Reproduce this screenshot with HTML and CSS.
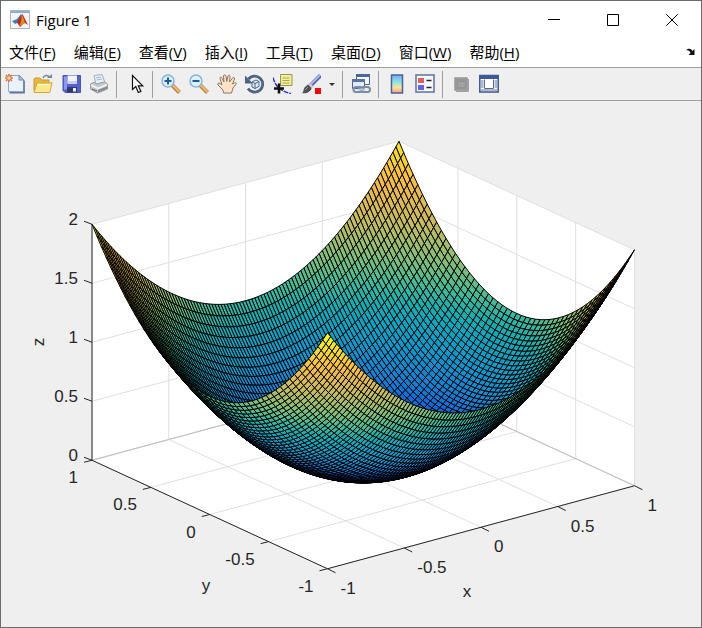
FILE: index.html
```html
<!DOCTYPE html>
<html lang="zh-CN">
<head>
<meta charset="utf-8">
<title>Figure 1</title>
<link rel="stylesheet" href="styles.css">
</head>
<body>
<div class="window">
  <header class="titlebar">
    <svg class="app-icon" viewBox="0 0 20 20" aria-hidden="true">
      <rect x=".5" y=".5" width="19" height="18" fill="#f3f5f7" stroke="#a9b4bf"/>
      <rect x="1" y="1" width="18" height="2" fill="#8fb0cc"/>
      <path d="M2 11l5-2 4-5 1 4-3 6-2-1-2 1z" fill="#3f7fb5"/>
      <path d="M7 12l5-8 1 1 5 10-3-2-2 1-3 3-2-3z" fill="#b5301c"/>
      <path d="M12 4l-1 8-2 4 4-2 2-1z" fill="#f08a24"/>
    </svg>
    <h1 class="title">Figure 1</h1>
    <div class="window-buttons">
      <button class="window-button" aria-label="最小化"><svg viewBox="0 0 12 12"><path d="M0 5.5h12"/></svg></button>
      <button class="window-button" aria-label="最大化"><svg viewBox="0 0 12 12"><path d="M.5.5h11v11H.5z"/></svg></button>
      <button class="window-button" aria-label="关闭"><svg viewBox="0 0 12 12"><path d="M.3.3l11.4 11.4M11.7.3L.3 11.7"/></svg></button>
    </div>
  </header>
  <nav class="menubar">
    <button class="menu">文件(<u>F</u>)</button>
    <button class="menu">编辑(<u>E</u>)</button>
    <button class="menu">查看(<u>V</u>)</button>
    <button class="menu">插入(<u>I</u>)</button>
    <button class="menu">工具(<u>T</u>)</button>
    <button class="menu">桌面(<u>D</u>)</button>
    <button class="menu">窗口(<u>W</u>)</button>
    <button class="menu">帮助(<u>H</u>)</button>
    <button class="dock" aria-label="停靠"><svg viewBox="0 0 10 8"><path d="M0 2.500C1.500 0 5 0 6.500 3L8.500 1v6H2.500l2-2C4 3 2 2 0 2.500z" fill="#111"/></svg></button>
  </nav>
  <div class="toolbar" role="toolbar">
    <button class="tool" aria-label="新建"><svg viewBox="0 0 20 20">
      <path d="M3.500 1.500h11l4 4v12h-15z" fill="#eaf2fc" stroke="#93a7cd"/><path d="M4.500 18.800h14.600V6.500" fill="none" stroke="#5f74a0" stroke-width="1.500"/>
      <path d="M14 1.500v4.500h4.500z" fill="#b5cbe8" stroke="#7288b3"/>
      <path d="M4 0v8M0 4h8M1 1l6 6M7 1L1 7" stroke="#d87543" stroke-width="1.600"/><circle cx="4" cy="4" r="1.800" fill="#ffd39a"/></svg></button>
    <button class="tool" aria-label="打开"><svg viewBox="0 0 20 20">
      <path d="M1 17V5l1-1h5l2 2h7v4" fill="#e8b83c" stroke="#c79a2d"/><path d="M1 18.500L4 9h14l1-.500-2 9.500-1 .500z" fill="#ffe98c" stroke="#d3a63a"/>
      <path d="M4.500 10.500h12" stroke="#fffbd3"/><path d="M10 4c1-3 5-3.500 6.500-.500" fill="none" stroke="#7089a9" stroke-width="1.500"/><path d="M14 4h5V0z" fill="#6d87a3"/></svg></button>
    <button class="tool" aria-label="保存"><svg viewBox="0 0 20 20">
      <path d="M2 1.500h17.500v17H4l-2-2z" fill="#5562cb" stroke="#4a55b0"/><path d="M3 2.500h3v13H3z" fill="#8b98f0"/>
      <path d="M6.500 1.500h9.500v8H6.500z" fill="#f1f3ff"/><path d="M6.500 7h9.500v3H6.500z" fill="#c9cff4"/><path d="M6 13h10v5.500H6z" fill="#32366f"/><path d="M12 14h3v3.500h-3z" fill="#f4f4f4"/></svg></button>
    <button class="tool" aria-label="打印"><svg viewBox="0 0 20 20">
      <path d="M5 1.500l8-1 3 8-9 2z" fill="#e7f0fb" stroke="#9fb0c8"/><path d="M7 4l5-1M8 6l5-1" stroke="#a7b9d2"/>
      <path d="M1.500 10l4-2 2 2 8-2 3 2v5l-10 4-7-4z" fill="#c6c8cc" stroke="#94989d"/><path d="M2 11l7 3.500 9-4" fill="none" stroke="#f6f6f6" stroke-width="1.500"/>
      <path d="M9 16l9-3.500v2L9 18.500z" fill="#85898f"/><path d="M3 15l5 2" stroke="#666"/></svg></button>
    <span class="separator"></span>
    <button class="tool" aria-label="编辑绘图"><svg viewBox="0 0 20 20">
      <path d="M7.500 1.500v14l3.300-3 2.500 6 2.600-1-2.600-5.700h4.400z" fill="#fff" stroke="#111" stroke-width="1.200"/></svg></button>
    <span class="separator"></span>
    <button class="tool" aria-label="放大"><svg viewBox="0 0 20 20">
      <path d="M11 11l7.500 7.500" stroke="#b07f50" stroke-width="4"/><path d="M11 10.500l7.500 7.500" stroke="#f0b765" stroke-width="2.400"/>
      <circle cx="7" cy="7" r="6" fill="#d9f3fc" stroke="#8ab4d8" stroke-width="1.500"/><path d="M7 3.500v7M3.500 7h7" stroke="#235a94" stroke-width="2"/></svg></button>
    <button class="tool" aria-label="缩小"><svg viewBox="0 0 20 20">
      <path d="M11 11l7.500 7.500" stroke="#b07f50" stroke-width="4"/><path d="M11 10.500l7.500 7.500" stroke="#f0b765" stroke-width="2.400"/>
      <circle cx="7" cy="7" r="6" fill="#d9f3fc" stroke="#8ab4d8" stroke-width="1.500"/><path d="M3.500 7h7" stroke="#235a94" stroke-width="2"/></svg></button>
    <button class="tool" aria-label="平移"><svg viewBox="0 0 20 20">
      <path d="M6.500 19l-.500-3-5-5c-1-1.500.500-2.500 2-1.500l2 1.500L3 4.500C2.500 3 4.300 2.500 5 4l2 4L6.500 2C6.500.500 8.500.500 9 2l.800 5.500L11 2c.500-1.500 2.200-1 2 .500L12.500 8 15.500 4c1-1.300 2.500-.300 2 1L15.500 10l2.300-1.200c1.500-.500 2 .700 1 1.700L16 14l-1.500 5z" fill="#ffe3c4" stroke="#8c7769"/></svg></button>
    <button class="tool" aria-label="三维旋转"><svg viewBox="0 0 20 20">
      <path d="M3.500 5A8 8 0 1 1 3 14.500" fill="none" stroke="#4d6489" stroke-width="2.800"/><path d="M0 1.500v8h8z" fill="#4d6489"/>
      <path d="M7 8l4-2 3 1.500v5l-4 2L7 13zM7 8l3 1.500 4-2M10 9.500v5" fill="#dce7f3" stroke="#4d6489"/></svg></button>
    <button class="tool" aria-label="数据游标"><svg viewBox="0 0 20 20">
      <path d="M0 3.500c2 8 7 14 18 16" fill="none" stroke="#2525e8" stroke-width="1.400" stroke-dasharray="5 1"/>
      <path d="M7.500.500h11.500v11H7.500z" fill="#f2ef9b" stroke="#98954f"/><path d="M9.500 4h7M9.500 6.500h7M9.500 9h7" stroke="#aaa552"/><path d="M6 9.500v10M1 14.500h10" stroke="#111" stroke-width="2.600"/></svg></button>
    <button class="tool" aria-label="刷亮"><svg viewBox="0 0 20 20">
      <path d="M19.500 1.500L10 11" stroke="#5d64a8" stroke-width="4"/><path d="M19 1L10 10" stroke="#a9b6ef" stroke-width="2"/><path d="M7.500 9.500l4 4" stroke="#ccc" stroke-width="3"/>
      <path d="M1 19c2-1 1-4 3-6l3-2.500 3.500 3.500C10 18 5 20 1 19z" fill="#4e5257"/><path d="M4 16l3-3" stroke="#999"/><path d="M14 14h6v6h-6z" fill="#f30808"/></svg></button>
    <button class="tool-drop" aria-label="刷亮选项"><svg viewBox="0 0 6 3"><path d="M0 0h6L3 3z" fill="#333"/></svg></button>
    <span class="separator"></span>
    <button class="tool" aria-label="链接绘图"><svg viewBox="0 0 20 20">
      <path d="M5.500.500h13v10h-13z" fill="#f3f9ff" stroke="#4d669a"/><path d="M5 0h14v3H5z" fill="#4d669a"/>
      <path d="M1.500 5.500h12v9h-12z" fill="#e0eefb" stroke="#4d669a"/><path d="M1 5h13v3H1z" fill="#5a72a3"/>
      <rect x="2.500" y="13" width="9" height="5" rx="2.500" fill="none" stroke="#7a8c9f" stroke-width="2"/><rect x="10" y="13" width="9" height="5" rx="2.500" fill="none" stroke="#7a8c9f" stroke-width="2"/><path d="M7 15.500h7" stroke="#b8cbdc" stroke-width="2"/></svg></button>
    <span class="separator"></span>
    <button class="tool" aria-label="插入颜色栏"><svg viewBox="0 0 20 20">
      <defs><linearGradient id="bar" x2="0" y2="1"><stop stop-color="#79a5f3"/><stop offset=".4" stop-color="#8ce8e4"/><stop offset=".7" stop-color="#fae392"/><stop offset="1" stop-color="#f69b93"/></linearGradient></defs>
      <rect x="4.500" y="1" width="11" height="18" fill="url(#bar)" stroke="#4a639a" stroke-width="1.500"/></svg></button>
    <button class="tool" aria-label="插入图例"><svg viewBox="0 0 20 20">
      <rect x="1" y="1" width="18" height="17" fill="#f6f8fc" stroke="#5f739d" stroke-width="1.500"/><path d="M3 4h6v5H3z" fill="#ea5b5f"/><path d="M3 11h6v5H3z" fill="#6364e8"/><path d="M11.500 6.500h5M11.500 13.500h5" stroke="#222" stroke-width="1.300"/></svg></button>
    <span class="separator"></span>
    <button class="tool" aria-label="隐藏绘图工具"><svg viewBox="0 0 20 20">
      <path d="M3.500 3.500h13v13h-13z" fill="#999" stroke="#acacac"/><path d="M5 17.300h12.300V5" fill="none" stroke="#8d8d8d"/><path d="M6.500 7.500h8v6h-8z" fill="#a2a2a2" stroke="#929292"/></svg></button>
    <button class="tool" aria-label="显示绘图工具"><svg viewBox="0 0 20 20">
      <path d="M.800 1.500h18.400v16.500H.800z" fill="#fff" stroke="#3d5485" stroke-width="1.500"/><path d="M0 1h20v4H0z" fill="#3d599b"/><path d="M2 6h2.500v8H2zM15.500 6H18v8h-2.500zM2 15h16v2H2z" fill="#a9b9d5"/><path d="M5.500 5.500v9h9v-9" fill="#fff" stroke="#5f6a7d"/></svg></button>
  </div>
  <main class="figure">
    <svg id="plot" class="plot" viewBox="1 101 700 526" role="img" aria-label="z = x² + y²">
      <g id="walls" class="walls"></g>
      <g id="grid" class="grid"></g>
      <g id="axes" class="axes"></g>
      <g id="surface" class="surface"></g>
      <g id="labels" class="labels"></g>
    </svg>
  </main>
</div>
<script src="plot.js"></script>
</body>
</html>
```
FILE: styles.css
```css
* { box-sizing: border-box; }
body {
  margin: 0;
  min-height: 100vh;
  display: flex;
  color: #000;
  background: #efefef;
  font: 15px/20px "Open Sans", "Noto Sans CJK SC", sans-serif;
}
button {
  margin: 0;
  padding: 0;
  border: 0;
  background: none;
  color: inherit;
  font: inherit;
}
svg { display: block; }
.window {
  flex: 1;
  display: flex;
  flex-direction: column;
  min-width: 0;
  border: 1px solid #6c6a6b;
}
.titlebar {
  display: flex;
  align-items: center;
  height: 37px;
  padding: 0 0 0 9px;
  background: #fff;
}
.app-icon { width: 20px; height: 20px; }
.title {
  flex: 1;
  margin: 0 0 0 6px;
  font-size: 15px;
  font-weight: 400;
}
.window-buttons { display: flex; }
.window-button {
  display: grid;
  place-items: center;
  width: 59px;
  height: 36px;
}
.window-button svg {
  width: 12px;
  height: 12px;
  fill: none;
  stroke: #000;
}
.menubar {
  display: flex;
  align-items: center;
  gap: 18px;
  height: 29px;
  padding: 0 5px 2px 8px;
  background: #fff;
}
.menu { white-space: nowrap; }
.menu u { text-underline-offset: 2px; }
.dock { margin-left: auto; }
.dock svg { width: 10px; height: 8px; }
.toolbar {
  display: flex;
  align-items: center;
  height: 34px;
  border-top: 1px solid #a0a0a0;
  border-bottom: 1px solid #a0a0a0;
  background: #efefef;
}
.tool {
  display: grid;
  place-items: center;
  width: 28px;
  height: 28px;
}
.tool svg { width: 20px; height: 20px; }
.tool-drop {
  display: grid;
  place-items: center;
  width: 14px;
  height: 28px;
}
.tool-drop svg { width: 6px; height: 3px; }
.separator {
  width: 8px;
  height: 27px;
  border-left: 3px solid transparent;
  background: linear-gradient(#a0a0a0, #a0a0a0) left / 1px 100% no-repeat;
}
.figure { flex: 1; background: #efefef; }
.plot { width: 100%; }
.walls { fill: #fff; }
.grid { fill: none; stroke: #dfdfdf; }
.grid .edge { stroke: #bfbfbf; }
.axes { fill: none; stroke: #262626; }
.surface {
  stroke: #000;
  stroke-width: 1;
  stroke-linejoin: round;
}
.labels {
  fill: #262626;
  font: 17px "Liberation Sans", Arial, sans-serif;
}
.start { text-anchor: start; }
.middle { text-anchor: middle; }
.end { text-anchor: end; }
```
FILE: plot.js
```js
const NS = 'http://www.w3.org/2000/svg';
const NX = 100;
const NY = 50;

// Orthographic view of the box [-1,1] x [-1,1] x [0,2].
function project(x, y, z) {
  return [363.25 + 153.5 * x - 117.75 * y, 473 - 41.5 * x - 54.25 * y - 118 * z];
}

function add(parent, name, attrs, text) {
  const el = document.createElementNS(NS, name);
  for (const key in attrs) el.setAttribute(key, attrs[key]);
  if (text !== undefined) el.textContent = text;
  document.getElementById(parent).appendChild(el);
}

function points(list) {
  return list.map(p => project(...p).map(v => v.toFixed(2)).join(',')).join(' ');
}

const parula = [
  [0, 53, 42, 135], [0.06, 44, 72, 189], [0.125, 3, 99, 225], [0.2, 20, 129, 214],
  [0.3, 6, 156, 207], [0.38, 6, 169, 194], [0.43, 18, 177, 178], [0.476, 51, 184, 161],
  [0.508, 76, 188, 146], [0.571, 125, 191, 124], [0.635, 165, 190, 107],
  [0.7, 200, 188, 93], [0.794, 233, 185, 78], [0.857, 255, 195, 55],
  [0.937, 246, 222, 36], [0.97, 245, 235, 28], [1, 249, 251, 14]
];
function color(t) {
  let i = 1;
  while (i < parula.length - 1 && t > parula[i][0]) i++;
  const a = parula[i - 1], b = parula[i];
  const f = (t - a[0]) / (b[0] - a[0]);
  return `rgb(${[1, 2, 3].map(k => Math.round(a[k] + (b[k] - a[k]) * f)).join(',')})`;
}

add('walls', 'polygon', { points: points([[-1, 1, 0], [-1, 1, 2], [1, 1, 2], [1, -1, 2], [1, -1, 0], [-1, -1, 0]]) });

const ticks = [-1, -0.5, 0, 0.5, 1];
for (const t of ticks) {
  add('grid', 'polyline', { points: points([[t, -1, 0], [t, 1, 0], [t, 1, 2]]) });
  add('grid', 'polyline', { points: points([[-1, t, 0], [1, t, 0], [1, t, 2]]) });
  add('grid', 'polyline', { points: points([[-1, 1, t + 1], [1, 1, t + 1], [1, -1, t + 1]]) });
}
add('grid', 'polyline', { class: 'edge', points: points([[-1, 1, 0], [1, 1, 0], [1, -1, 0]]) });
add('axes', 'polyline', { points: points([[-1, 1, 2], [-1, 1, 0], [-1, -1, 0], [1, -1, 0]]) });

function tick(p, dx, dy) {
  const [x, y] = project(...p);
  add('axes', 'path', { d: `M${x} ${y}l${dx} ${dy}` });
}
function label(p, dx, dy, cls, text) {
  const [x, y] = project(...p);
  add('labels', 'text', { x: x + dx, y: y + dy, class: cls }, text);
}
for (const t of ticks) {
  tick([t, -1, 0], 8, 4);
  tick([-1, t, 0], -8, 2);
  tick([-1, 1, t + 1], -8, -3);
  label([t, -1, 0], 13, 25, 'start', t);
  label([-1, t, 0], -14, 23, 'end', t);
  label([-1, 1, t + 1], -14, 1, 'end', t + 1);
}
add('labels', 'text', { x: 467, y: 597, class: 'middle' }, 'x');
add('labels', 'text', { x: 206, y: 591, class: 'middle' }, 'y');
add('labels', 'text', { x: 44, y: 342, class: 'middle', transform: 'rotate(-90 44 342)' }, 'z');

// Facets are drawn back to front, each coloured by its lowest-index corner.
for (let j = NY - 1; j >= 0; j--) {
  for (let i = NX - 1; i >= 0; i--) {
    const x0 = -1 + 2 * i / NX, x1 = -1 + 2 * (i + 1) / NX;
    const y0 = -1 + 2 * j / NY, y1 = -1 + 2 * (j + 1) / NY;
    const h = (x, y) => [x, y, x * x + y * y];
    add('surface', 'polygon', {
      points: points([h(x0, y0), h(x1, y0), h(x1, y1), h(x0, y1)]),
      fill: color((x0 * x0 + y0 * y0) / 2)
    });
  }
}
```
